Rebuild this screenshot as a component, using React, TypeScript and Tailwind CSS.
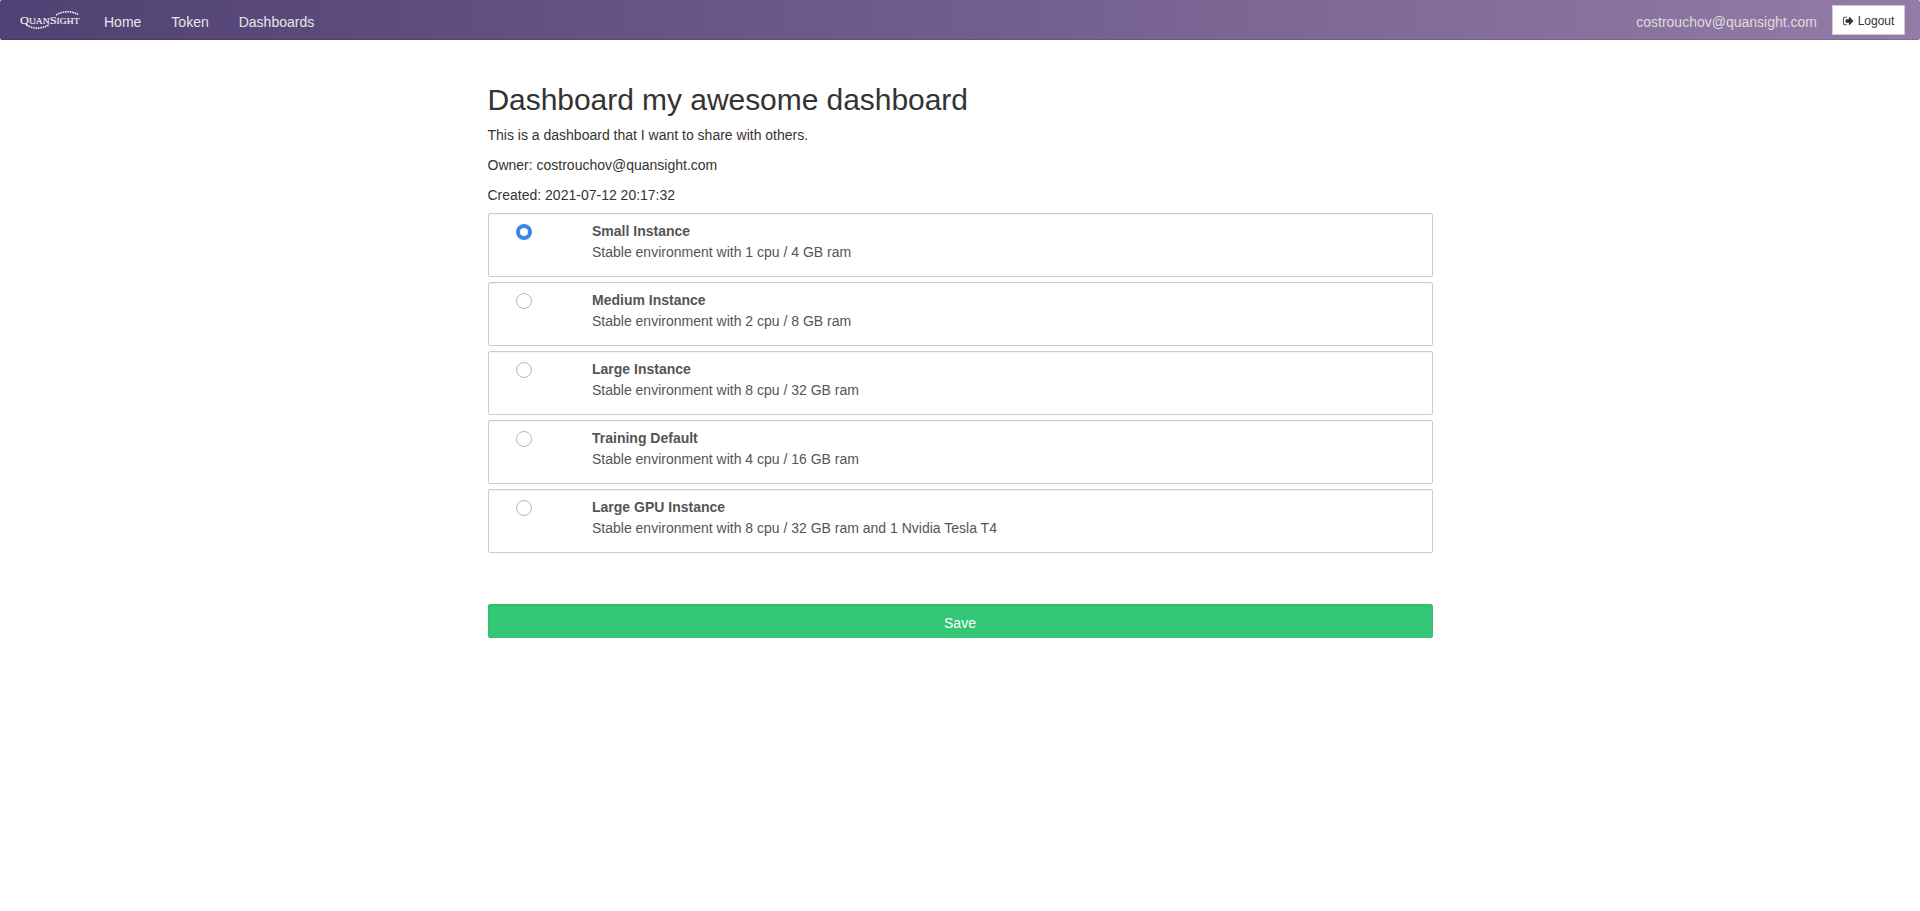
const instances = [
  { name: 'Small Instance', detail: 'Stable environment with 1 cpu / 4 GB ram' },
  { name: 'Medium Instance', detail: 'Stable environment with 2 cpu / 8 GB ram' },
  { name: 'Large Instance', detail: 'Stable environment with 8 cpu / 32 GB ram' },
  { name: 'Training Default', detail: 'Stable environment with 4 cpu / 16 GB ram' },
  { name: 'Large GPU Instance', detail: 'Stable environment with 8 cpu / 32 GB ram and 1 Nvidia Tesla T4' },
];

function Logo() {
  return (
    <svg width="64" height="24" viewBox="0 0 64 24" className="shrink-0" fill="#f1eef5">
      <text x="2" y="15.5" fontFamily="'Liberation Serif', serif" fontSize="11" stroke="#f1eef5" strokeWidth="0.15" textLength="59.5" lengthAdjust="spacingAndGlyphs">
        Q<tspan fontSize="8.5">UAN</tspan>S<tspan fontSize="8.5">IGHT</tspan>
      </text>
      <path d="M38 7 Q49 0.5 61 6.800" fill="none" stroke="#f1eef5" strokeWidth="1.6" strokeDasharray="1.6 0.8" />
      <path d="M8.500 17 Q19 23.500 31.500 16.500" fill="none" stroke="#f1eef5" strokeWidth="1.6" strokeDasharray="1.6 0.8" />
    </svg>
  );
}

function SignOutIcon() {
  return (
    <svg width="11" height="12" viewBox="0 -1536 1664 1792" className="shrink-0" fill="#333333">
      <g transform="scale(1,-1)">
        <path d="M640 96q0-4 1-20t.5-26.5-3-23.5-10-19.5T608 0H288Q169 0 84.500 84.500T0 288v704q0 119 84.500 203.500T288 1280h320q13 0 22.500-9.500T640 1248q0-4 1-20t.5-26.500-3-23.500-10-19.500-20.500-6.500H288q-66 0-113-47t-47-113V288q0-66 47-113t113-47h312l11.500-1 11.500-3 8-5.500 7-9zM1568 640q0-26-19-45L1005 51q-19-19-45-19t-45 19-19 45v288H448q-26 0-45 19t-19 45v384q0 26 19 45t45 19h448v288q0 26 19 45t45 19 45-19l544-544q19-19 19-45z" />
      </g>
    </svg>
  );
}

export default function App() {
  return (
    <div className="min-h-[911px] bg-white font-['Liberation_Sans',Arial,sans-serif] text-sm leading-5 text-[#333333]">
      <nav className="flex h-10 items-center rounded-[2px] border-b border-black/10 bg-linear-to-r from-[#4f4173] to-[#957ba7] pr-[15px] pl-[18px] text-[#e7e7e7]">
        <Logo />
        <div className="flex gap-[30px] pt-1 pl-[22px]">
          <a href="#home">Home</a>
          <a href="#token">Token</a>
          <a href="#dashboards">Dashboards</a>
        </div>
        <span className="ml-auto pt-1 text-[#dddddd]">costrouchov@quansight.com</span>
        <button className="ml-[15px] flex h-[30px] w-[73px] items-center justify-center gap-1 border border-[#cccccc] bg-white pt-0.5 text-xs text-[#333333]">
          <SignOutIcon />
          Logout
        </button>
      </nav>
      <main className="mx-auto w-[945px] pt-[43px]">
        <h1 className="mb-[9px] text-[30px] leading-[33px] tracking-[-0.05px]">Dashboard my awesome dashboard</h1>
        <div className="flex flex-col gap-2.5">
          <p>This is a dashboard that I want to share with others.</p>
          <p>Owner: costrouchov@quansight.com</p>
          <p>Created: 2021-07-12 20:17:32</p>
        </div>
        <form>
          <div className="mt-2 flex flex-col gap-[5px]">
            {instances.map((instance, index) => (
              <label
                key={instance.name}
                className="flex h-16 rounded-[2px] border border-[#cccccc] pt-[7px] text-[#555555] shadow-[inset_0_1px_1px_rgba(0,0,0,0.05)]"
              >
                <input
                  type="radio"
                  name="instance"
                  defaultChecked={index === 0}
                  className="mt-[3px] ml-[27px] size-4 shrink-0 appearance-none rounded-full border border-[#bfb8b1] bg-white checked:border-4 checked:border-[#3b87e6]"
                />
                <span className="ml-[60.5px] flex flex-col leading-[21px]">
                  <strong className="font-bold">{instance.name}</strong>
                  <span>{instance.detail}</span>
                </span>
              </label>
            ))}
          </div>
          <button
            type="button"
            className="mt-[51px] h-[34px] w-full rounded-[2px] border border-[#30c070] bg-[#33c674] pt-1 text-white shadow-[inset_0_1px_1px_rgba(0,0,0,0.05)]"
          >
            Save
          </button>
        </form>
      </main>
    </div>
  );
}
